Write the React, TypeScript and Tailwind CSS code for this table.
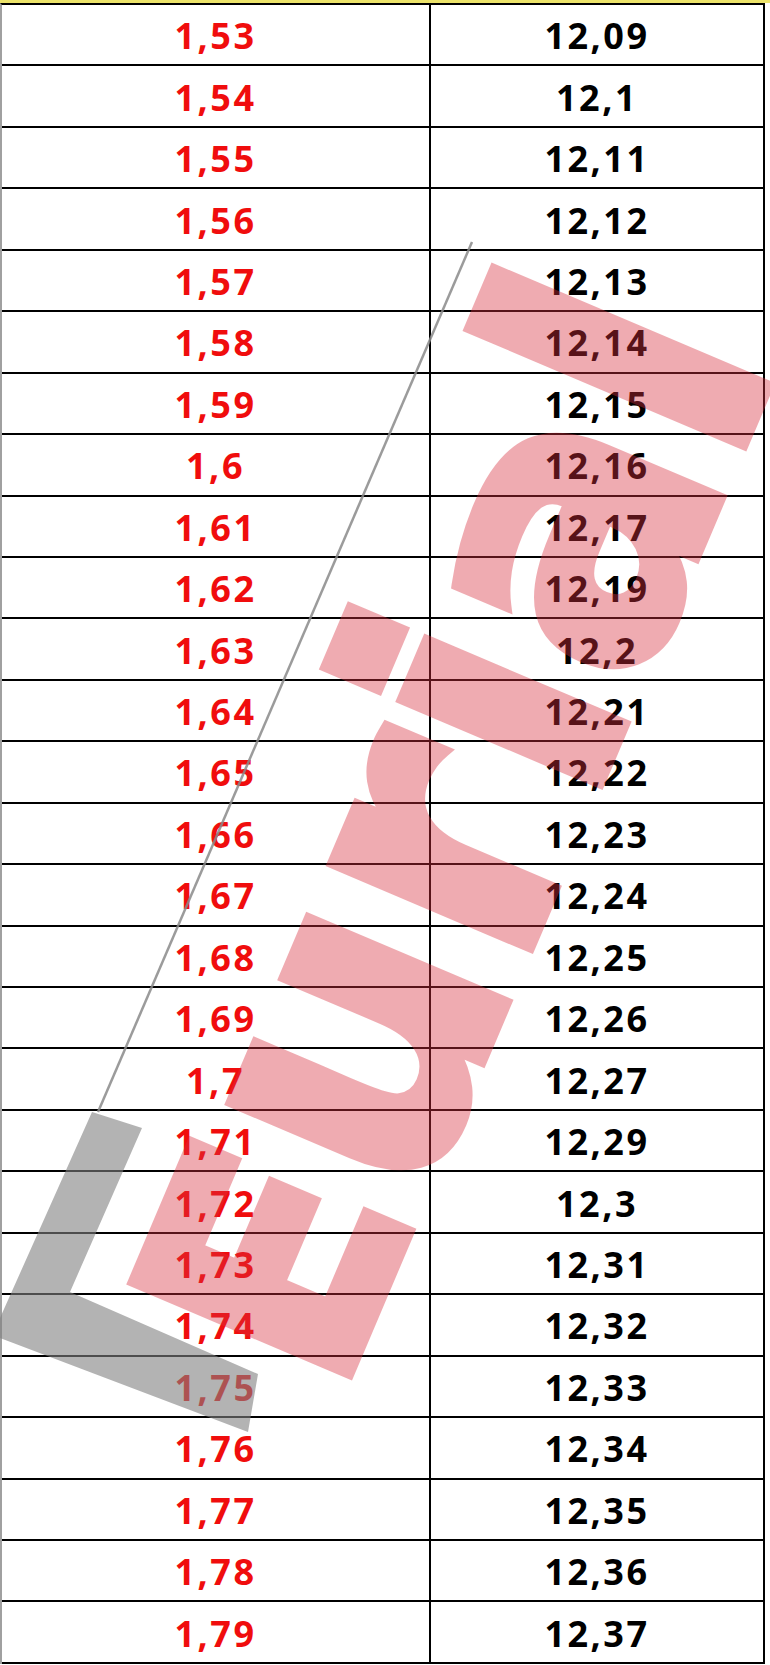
import React from 'react';

const left = [
  '1,53', '1,54', '1,55', '1,56', '1,57', '1,58', '1,59', '1,6', '1,61',
  '1,62', '1,63', '1,64', '1,65', '1,66', '1,67', '1,68', '1,69', '1,7',
  '1,71', '1,72', '1,73', '1,74', '1,75', '1,76', '1,77', '1,78', '1,79',
];

const right = [
  '12,09', '12,1', '12,11', '12,12', '12,13', '12,14', '12,15', '12,16', '12,17',
  '12,19', '12,2', '12,21', '12,22', '12,23', '12,24', '12,25', '12,26', '12,27',
  '12,29', '12,3', '12,31', '12,32', '12,33', '12,34', '12,35', '12,36', '12,37',
];

// watermark drawn over the sheet
function Watermark() {
  return (
    <svg
      className="absolute inset-0 pointer-events-none"
      width="770"
      height="1665"
      viewBox="0 0 770 1665"
    >
      <line x1="472" y1="242" x2="98" y2="1112" stroke="#8a8a8a" strokeWidth="2.5" opacity="0.85" />
      <polygon
        points="92,1112 142,1128 70,1292 258,1374 248,1432 0,1338 0,1318"
        fill="#808080"
        opacity="0.6"
      />
      <text
        transform="translate(338,1398) rotate(-67)"
        fontFamily="'DejaVu Sans', sans-serif"
        fontWeight="bold"
        textLength="1130"
        lengthAdjust="spacingAndGlyphs"
        fill="#d9303f"
        stroke="#d9303f"
        strokeWidth="12"
        strokeLinejoin="miter"
        opacity="0.4"
      >
        <tspan fontSize="320">E</tspan>
        <tspan fontSize="390">urial</tspan>
      </text>
    </svg>
  );
}

export default function App() {
  return (
    <div className="relative w-[770px] h-[1665px] bg-white overflow-hidden font-['Open_Sans',sans-serif]">
      <div className="h-[3px] bg-[#ece36a]" />
      <div className="mr-[5px] border-l-2 border-l-[#a0a0a0] border-t-2 border-t-black border-r-2 border-r-black">
        {left.map((l, i) => (
          <div key={l} className="grid grid-cols-[429px_1fr] h-[61.44px] border-b-2 border-black">
            <div className="flex items-center justify-center border-r-2 border-black pt-[3px] text-[36px] font-bold leading-none tracking-[2.5px] text-[#f00d0d]">
              {l}
            </div>
            <div className="flex items-center justify-center pt-[3px] text-[36px] font-bold leading-none tracking-[2.5px] text-black">
              {right[i]}
            </div>
          </div>
        ))}
      </div>
      <Watermark />
    </div>
  );
}
